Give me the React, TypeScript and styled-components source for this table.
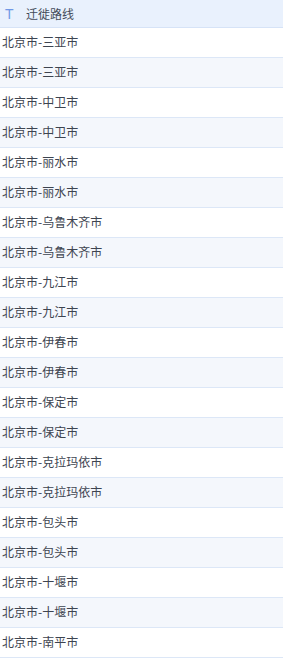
import React from "react";
import styled, { createGlobalStyle } from "styled-components";

const Global = createGlobalStyle`
  html, body { margin: 0; padding: 0; background: #ffffff; }
  body { font-family: "Noto Sans CJK SC", "Liberation Sans", sans-serif; }
`;

const Table = styled.div`
  width: 283px;
  display: flex;
  flex-direction: column;
`;

const Header = styled.div`
  height: 27px;
  display: flex;
  align-items: center;
  background: #e9f1fd;
  border-bottom: 1px solid #d6e3f7;
  font-size: 12px;
  line-height: 1;
  color: #444c5a;
`;

const TypeIcon = styled.span`
  width: 26px;
  padding-left: 5px;
  box-sizing: border-box;
  font-family: "Liberation Sans", sans-serif;
  font-size: 14px;
  color: #7098e6;
`;

const Row = styled.div<{ $alt: boolean }>`
  height: 30px;
  box-sizing: border-box;
  display: flex;
  align-items: center;
  padding: 0 0 2px 2px;
  background: ${(p) => (p.$alt ? "#f4f7fc" : "#ffffff")};
  border-bottom: 1px solid #dce7f7;
  font-size: 12px;
  line-height: 1;
  color: #3d4450;
  white-space: nowrap;
`;

const cities = [
  "三亚市", "三亚市", "中卫市", "中卫市", "丽水市", "丽水市",
  "乌鲁木齐市", "乌鲁木齐市", "九江市", "九江市", "伊春市", "伊春市",
  "保定市", "保定市", "克拉玛依市", "克拉玛依市", "包头市", "包头市",
  "十堰市", "十堰市", "南平市",
];

export default function App() {
  return (
    <>
      <Global />
      <Table>
        <Header>
          <TypeIcon>T</TypeIcon>
          <span>迁徙路线</span>
        </Header>
        {cities.map((c, i) => (
          <Row key={i} $alt={i % 2 === 1}>
            北京市-{c}
          </Row>
        ))}
      </Table>
    </>
  );
}
